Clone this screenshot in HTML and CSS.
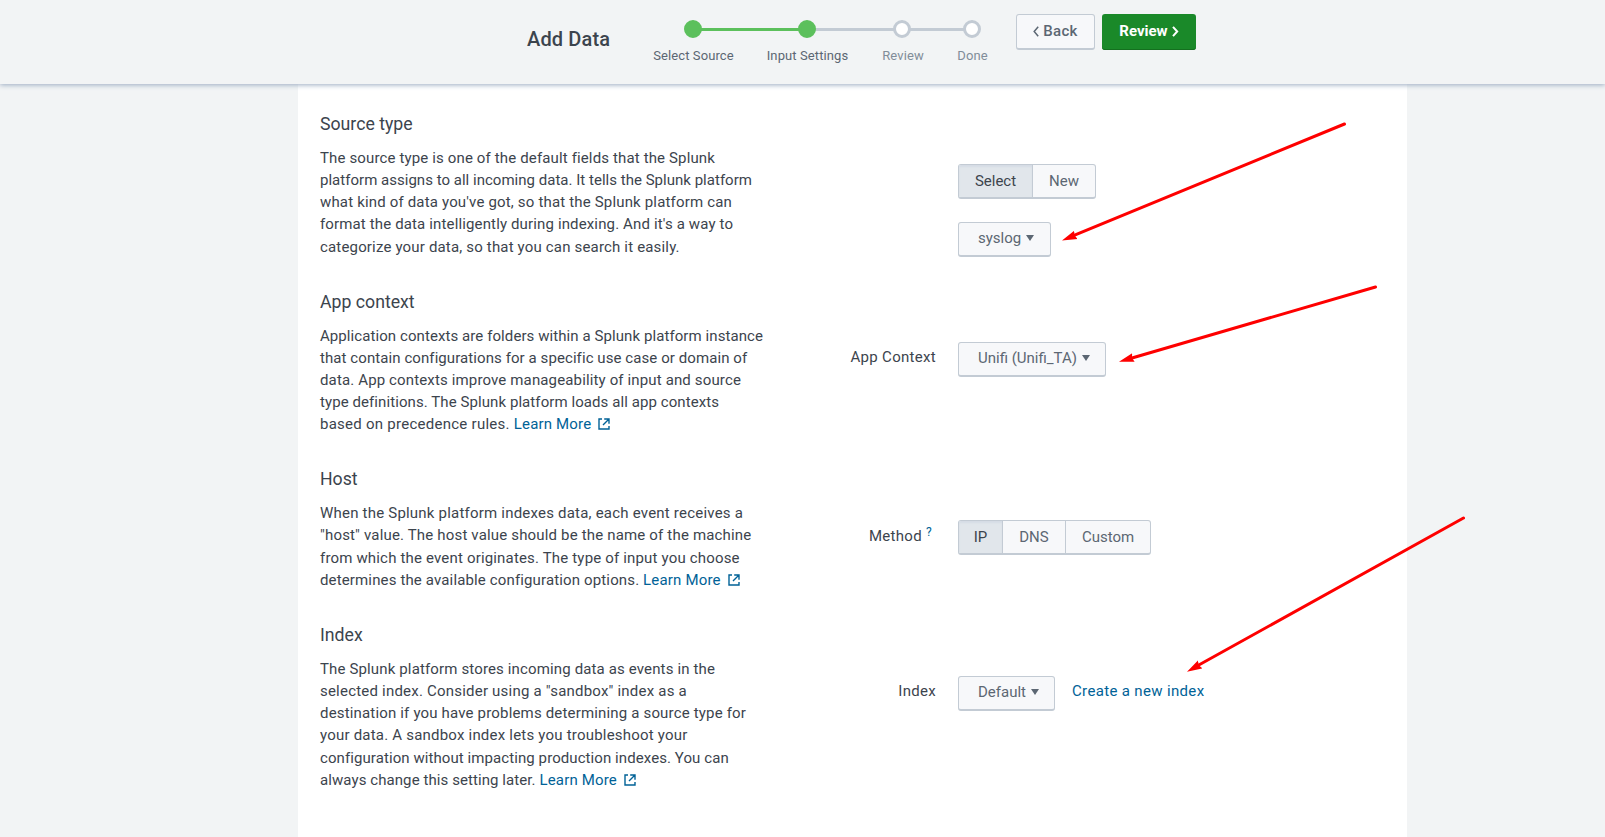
FILE: index.html
```html
<!DOCTYPE html>
<html lang="en">
<head>
<meta charset="utf-8">
<title>Add Data</title>
<link rel="stylesheet" href="styles.css">
</head>
<body>
<svg class="defs" width="0" height="0">
  <symbol id="ext" viewBox="0 0 12 12"><path d="M4 1H1v10h10V8M6.200 1H11v4.800M11 1L5 7" fill="none" stroke="currentColor" stroke-width="1.400"/></symbol>
</svg>
<header class="header">
  <h1 class="title">Add Data</h1>
  <ol class="steps">
    <li class="step done s1"><i class="dot"></i><span>Select Source</span></li>
    <li class="step done s2"><i class="dot"></i><span>Input Settings</span></li>
    <li class="step s3"><i class="dot"></i><span>Review</span></li>
    <li class="step s4"><i class="dot"></i><span>Done</span></li>
  </ol>
  <div class="nav">
    <button class="btn back"><svg width="6" height="11" viewBox="0 0 6 11"><path d="M5.200 .8L1.200 5.500l4 4.700" fill="none" stroke="currentColor" stroke-width="1.500"/></svg>Back</button>
    <button class="btn primary">Review<svg width="7" height="11" viewBox="0 0 7 11"><path d="M1 .8l4.200 4.700L1 10.200" fill="none" stroke="currentColor" stroke-width="2"/></svg></button>
  </div>
</header>
<main class="panel">
  <section class="section">
    <div class="info">
      <h2>Source type</h2>
      <p><span class="k3">The source type is one of the default fields that the Splunk</span><br><span class="k1">platform assigns to all incoming data. It tells the Splunk platform</span><br><span class="k4">what kind of data you've got, so that the Splunk platform can</span><br><span class="k3">format the data intelligently during indexing. And it's a way to</span><br><span class="k4">categorize your data, so that you can search it easily.</span></p>
    </div>
    <div class="label"></div>
    <div class="controls stack">
      <div class="group"><button class="seg on w74">Select</button><button class="seg w64">New</button></div>
      <button class="drop w93">syslog<i class="caret"></i></button>
    </div>
  </section>
  <section class="section">
    <div class="info">
      <h2>App context</h2>
      <p><span class="k2">Application contexts are folders within a Splunk platform instance</span><br><span class="k2">that contain configurations for a specific use case or domain of</span><br><span class="k3">data. App contexts improve manageability of input and source</span><br><span class="k2">type definitions. The Splunk platform loads all app contexts</span><br><span class="k6">based on precedence rules. </span><a class="k4" href="#">Learn More <svg class="ext"><use href="#ext"/></svg></a></p>
    </div>
    <div class="label">App Context</div>
    <div class="controls"><button class="drop w148">Unifi (Unifi_TA)<i class="caret"></i></button></div>
  </section>
  <section class="section">
    <div class="info">
      <h2>Host</h2>
      <p><span class="k5">When the Splunk platform indexes data, each event receives a</span><br><span class="k4">"host" value. The host value should be the name of the machine</span><br><span class="k4">from which the event originates. The type of input you choose</span><br><span class="k3">determines the available configuration options. </span><a class="k4" href="#">Learn More <svg class="ext"><use href="#ext"/></svg></a></p>
    </div>
    <div class="label low">Method <a class="help" href="#">?</a></div>
    <div class="controls low"><div class="group"><button class="seg on w44">IP</button><button class="seg w63">DNS</button><button class="seg w86">Custom</button></div></div>
  </section>
  <section class="section">
    <div class="info">
      <h2>Index</h2>
      <p><span class="k3">The Splunk platform stores incoming data as events in the</span><br><span class="k5">selected index. Consider using a "sandbox" index as a</span><br><span class="k4">destination if you have problems determining a source type for</span><br><span class="k5">your data. A sandbox index lets you troubleshoot your</span><br><span class="k2">configuration without impacting production indexes. You can</span><br><span class="k2">always change this setting later. </span><a class="k4" href="#">Learn More <svg class="ext"><use href="#ext"/></svg></a></p>
    </div>
    <div class="label low">Index</div>
    <div class="controls low"><button class="drop w97">Default<i class="caret"></i></button><a class="create" href="#">Create a new index</a></div>
  </section>
</main>
<svg class="arrows" width="1605" height="837" viewBox="0 0 1605 837">
  <defs><marker id="head" markerUnits="userSpaceOnUse" markerWidth="16" markerHeight="12" refX="15" refY="5" orient="auto"><path d="M0 .5L15 5L0 9.500L1.500 5z" fill="#fe0000"/></marker></defs>
  <g stroke="#fe0000" stroke-width="3" stroke-linecap="round">
    <path d="M1344.500 124L1074 235.400"/><path d="M1375.500 287L1132 358"/><path d="M1463.500 518L1197 666"/>
  </g>
  <g stroke="none" fill="none">
    <path d="M1345 124L1062 240.500" marker-end="url(#head)"/><path d="M1376 286.700L1119 361.700" marker-end="url(#head)"/><path d="M1464 517.500L1187 671.700" marker-end="url(#head)"/>
  </g>
</svg>
</body>
</html>
```
FILE: styles.css
```css
* { box-sizing: border-box; }
body { margin: 0; height: 837px; overflow: hidden; background: #f2f4f5; color: #3c444d; font: 15px/22.2px Roboto, "Liberation Sans", sans-serif; }
a { color: #006297; text-decoration: none; }
button { font: inherit; margin: 0; }
.defs { position: absolute; }
.header { position: relative; height: 84px; background: #f2f4f5; display: flex; box-shadow: 0 1px 5px #9aabc0; }
.title { margin: 26px 0 0 527px; width: 108px; font-size: 20px; line-height: 26px; font-weight: 500; white-space: nowrap; letter-spacing: .15px; }
.steps { list-style: none; margin: 20px 0 0; padding: 0; width: 381px; display: flex; }
.step { position: relative; display: flex; flex-direction: column; align-items: center; font-size: 13px; line-height: 18px; color: #818d99; white-space: nowrap; letter-spacing: .1px; }
.step.done { color: #5c6773; }
.step span { margin-top: 9px; padding-left: 2px; }
.s1 { width: 115px; } .s2 { width: 113px; } .s3 { width: 78px; } .s4 { width: 61px; }
.dot { position: relative; z-index: 1; width: 18px; height: 18px; border: 3px solid #c3cbd4; border-radius: 50%; background: #fff; }
.done .dot { background: #5cc05c; border-color: #5cc05c; }
.step::before, .step::after { content: ""; position: absolute; top: 8px; height: 3px; width: 50%; background: #c3cbd4; }
.step::before { left: 0; } .step::after { right: 0; }
.done::before, .s1::after { background: #5cc05c; }
.s1::before, .s4::after { display: none; }
.nav { display: flex; gap: 7px; margin-top: 14px; }
.btn { height: 36px; padding: 0 0 2px; display: flex; align-items: center; justify-content: center; gap: 4px; border-radius: 3px; font-weight: 500; }
.back { width: 79px; border: 1px solid #c3cbd4; border-bottom-width: 2px; background: #f7f8fa; color: #5c6773; letter-spacing: .3px; padding-bottom: 1px; }
.primary { width: 94px; border: 0; background: #1a8929; color: #fff; font-weight: 700; box-shadow: inset 0 -1px #14701f; }
.panel { margin-left: 298px; width: 1109px; height: 753px; padding: 28.800px 0 0 22px; background: #fff; }
.section { display: grid; grid-template-columns: 460px 156px 1fr; column-gap: 11px; padding-bottom: 32.700px; }
h2 { margin: 0 0 11px; font-size: 17.700px; line-height: 23px; font-weight: 400; }
p { margin: 0; white-space: nowrap; }
.k1 { letter-spacing: .02px; }
.k2 { letter-spacing: .08px; }
.k3 { letter-spacing: .14px; }
.k4 { letter-spacing: .17px; }
.k5 { letter-spacing: .21px; }
.k6 { letter-spacing: .26px; }
.ext { width: 12px; height: 12px; margin-left: 3px; vertical-align: -1px; }
.label { text-align: right; padding: 55.500px 11px 0 0; letter-spacing: .3px; }
.label.low { padding-top: 56.500px; }
.help { font-size: 12px; vertical-align: 5px; line-height: 1; margin-right: 4px; }
.controls { display: flex; align-items: flex-start; padding-top: 51.200px; }
.controls.low { padding-top: 52.200px; }
.stack { flex-direction: column; gap: 23px; }
.group { display: flex; height: 35px; border: 1px solid #c3cbd4; border-bottom-width: 2px; border-radius: 3px; background: #f7f8fa; overflow: hidden; }
.seg { border: 0; border-left: 1px solid #c3cbd4; background: transparent; color: #5c6773; padding: 0; }
.seg:first-child { border-left: 0; }
.seg.on { background: #e1e6eb; color: #3c444d; box-shadow: inset 0 2px 2px #d5dce5; }
.drop { display: flex; align-items: center; height: 35px; padding: 0 0 2px 19px; border: 1px solid #c3cbd4; border-bottom-width: 2px; border-radius: 3px; background: #f7f8fa; color: #5c6773; white-space: nowrap; }
.caret { margin-left: 5px; border: 4px solid transparent; border-top: 6px solid #5c6773; border-bottom: 0; }
.w44 { width: 43px; } .w63 { width: 63px; } .w64 { width: 63px; } .w74 { width: 73px; } .w86 { width: 85px; }
.w93 { width: 93px; } .w97 { width: 97px; } .w148 { width: 148px; }
.create { margin: 4px 0 0 17px; letter-spacing: .34px; }
.arrows { position: absolute; left: 0; top: 0; pointer-events: none; }
```
